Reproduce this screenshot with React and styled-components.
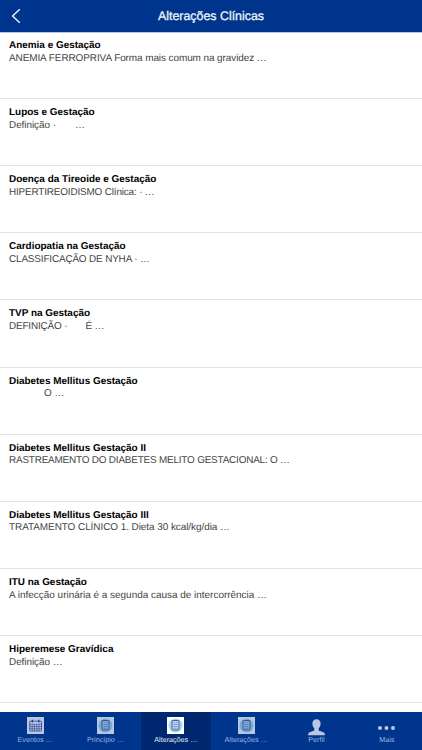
import React from 'react'
import styled, { createGlobalStyle } from 'styled-components'

const GlobalStyle = createGlobalStyle`
  body {
    margin: 0;
    background-color: #fff;
    font-family: "Liberation Sans", Arial, sans-serif;
    text-rendering: geometricPrecision;
  }
`

const Screen = styled.div`
  width: 422px;
  height: 750px;
  display: flex;
  flex-direction: column;
  overflow: hidden;
`

const Header = styled.header`
  flex: none;
  height: 33px;
  box-sizing: border-box;
  display: grid;
  grid-template-columns: 32px 1fr 32px;
  align-items: center;
  color: #eef3fb;
  background-color: #00358e;
  border-bottom: 1px solid #b3c5e3;
`

const BackButton = styled.button`
  display: flex;
  margin: 0;
  padding: 0 0 0 11px;
  border: 0;
  background: none;
  color: inherit;
`

const Title = styled.h1`
  margin: 0;
  text-align: center;
  font-size: 12.4px;
  line-height: 16px;
  font-weight: normal;
  -webkit-text-stroke: .3px currentColor;
`

const List = styled.ul`
  flex: 1;
  min-height: 0;
  margin: 0;
  padding: 0;
  list-style: none;
  overflow: hidden;
`

const Item = styled.li`
  height: 67.17px;
  box-sizing: border-box;
  padding: 8px 9px 0;
  border-bottom: 1px solid #e2e2e2;

  &:first-child {
    height: 66px;
    padding-top: 7px;
  }
`

const ItemTitle = styled.div`
  color: #000;
  font-size: 9.95px;
  line-height: 12.5px;
  font-weight: bold;
`

const ItemText = styled.div`
  color: #444;
  font-size: 9.95px;
  line-height: 12.5px;
  letter-spacing: ${props => props.$spacing || 0}px;
  white-space: pre;
`

const TabBar = styled.nav`
  flex: none;
  height: 38px;
  display: grid;
  grid-template-columns: repeat(6, 1fr);
  background-color: #00358e;
`

const Tab = styled.a`
  display: flex;
  flex-direction: column;
  align-items: center;
  padding-top: 5px;
  color: ${props => props.$active ? '#e4eaf5' : '#9db3dc'};
  background-color: ${props => props.$active ? '#002870' : 'transparent'};
`

const TabIcon = styled.span`
  display: flex;
  height: 17px;
  opacity: ${props => props.$active ? 1 : .72};
`

const TabLabel = styled.span`
  margin-top: 1px;
  font-size: 7.2px;
  line-height: 10px;
  white-space: nowrap;
`

const BackIcon = () => (
  <svg width="10" height="16" viewBox="0 0 10 16" fill="none" stroke="currentColor" strokeWidth="1.4">
    <path d="M8.8 1.2L1.6 8l7.2 6.8"/>
  </svg>
)

const CalendarIcon = () => (
  <svg width="17" height="17" viewBox="0 0 17 17">
    <path fill="#fff" d="M0 0h17v17H0z"/>
    <g fill="none" stroke="#24348e" strokeWidth=".7">
      <rect x="2.7" y="4.2" width="11.8" height="9.8" rx=".6"/>
      <path strokeWidth=".55" d="M2.7 7.3h11.8M2.7 9.6h11.8M2.7 11.8h11.8M5.1 7.3V14M7.4 7.3V14M9.8 7.3V14M12.1 7.3V14"/>
      <path strokeWidth="1.2" d="M5.3 2.8v2.6M11.8 2.8v2.6"/>
    </g>
  </svg>
)

const DocumentIcon = () => (
  <svg width="17" height="17" viewBox="0 0 17 17">
    <path fill="#fff" d="M0 0h17v17H0z"/>
    <circle cx="8.5" cy="8.5" r="7" fill="#a5dbe8"/>
    <rect x="5" y="3.5" width="7" height="9.5" rx=".6" fill="#c3d6f0" stroke="#36519f" strokeWidth=".9"/>
    <path fill="none" stroke="#6480bd" strokeWidth=".7" d="M6.5 5.5h1.4M8.8 5.5h1.7M6.5 7.5h4M6.5 9.5h4M6.5 11.3h4"/>
  </svg>
)

const PersonIcon = () => (
  <svg width="17" height="19" viewBox="0 0 17 19" fill="#fff">
    <path d="M8.5 2.2c2.6 0 4.1 1.7 4.1 4.2 0 2-.8 3.8-1.9 4.8v1.5c0 .8.5 1.1 1.3 1.4l3.1 1.2c1.2.4 1.7 1.1 1.9 2.9H0c.2-1.8.7-2.5 1.9-2.9L5 14.1c.8-.3 1.3-.6 1.3-1.4v-1.5c-1.1-1-1.9-2.8-1.9-4.8 0-2.5 1.5-4.2 4.1-4.2z"/>
  </svg>
)

const MoreIcon = () => (
  <svg width="17" height="17" viewBox="0 0 17 17" fill="#fff">
    <circle cx="2" cy="10.9" r="2"/>
    <circle cx="8.5" cy="10.9" r="2"/>
    <circle cx="15" cy="10.9" r="2"/>
  </svg>
)

const items = [
  { title: 'Anemia e Gestação', text: 'ANEMIA FERROPRIVA Forma mais comum na gravidez …', spacing: -.07 },
  { title: 'Lupos e Gestação', text: 'Definição ·       …', spacing: -.05 },
  { title: 'Doença da Tireoide e Gestação', text: 'HIPERTIREOIDISMO Clínica: · …', spacing: -.17 },
  { title: 'Cardiopatia na Gestação', text: 'CLASSIFICAÇÃO DE NYHA · …', spacing: -.16 },
  { title: 'TVP na Gestação', text: 'DEFINIÇÃO ·       É …', spacing: -.17 },
  { title: 'Diabetes Mellitus Gestação', text: '             O …', spacing: -.06 },
  { title: 'Diabetes Mellitus Gestação II', text: 'RASTREAMENTO DO DIABETES MELITO GESTACIONAL: O …', spacing: -.2 },
  { title: 'Diabetes Mellitus Gestação III', text: 'TRATAMENTO CLÍNICO 1. Dieta 30 kcal/kg/dia …', spacing: -.05 },
  { title: 'ITU na Gestação', text: 'A infecção urinária é a segunda causa de intercorrência …' },
  { title: 'Hiperemese Gravídica', text: 'Definição …', spacing: -.05 }
]

const tabs = [
  { label: 'Eventos …', Icon: CalendarIcon },
  { label: 'Princípio …', Icon: DocumentIcon },
  { label: 'Alterações …', Icon: DocumentIcon, active: true },
  { label: 'Alterações …', Icon: DocumentIcon },
  { label: 'Perfil', Icon: PersonIcon },
  { label: 'Mais', Icon: MoreIcon }
]

const App = () => (
  <Screen>
    <GlobalStyle/>
    <Header>
      <BackButton aria-label="Voltar">
        <BackIcon/>
      </BackButton>
      <Title>Alterações Clínicas</Title>
    </Header>
    <List>
      {items.map(item => (
        <Item key={item.title}>
          <ItemTitle>{item.title}</ItemTitle>
          <ItemText $spacing={item.spacing}>{item.text}</ItemText>
        </Item>
      ))}
    </List>
    <TabBar>
      {tabs.map(({ label, Icon, active }, i) => (
        <Tab key={i} $active={active}>
          <TabIcon $active={active}>
            <Icon/>
          </TabIcon>
          <TabLabel>{label}</TabLabel>
        </Tab>
      ))}
    </TabBar>
  </Screen>
)

export default App
